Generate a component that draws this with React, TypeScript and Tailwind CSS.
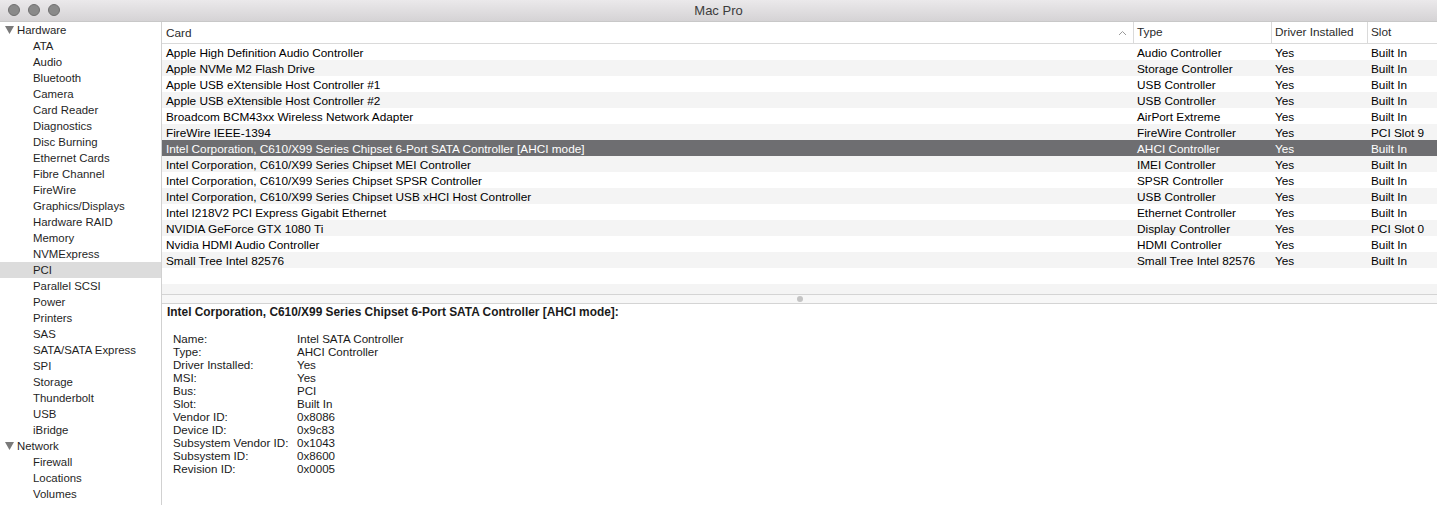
import React from 'react';

const hardware = [
  'ATA', 'Audio', 'Bluetooth', 'Camera', 'Card Reader', 'Diagnostics', 'Disc Burning', 'Ethernet Cards',
  'Fibre Channel', 'FireWire', 'Graphics/Displays', 'Hardware RAID', 'Memory', 'NVMExpress', 'PCI',
  'Parallel SCSI', 'Power', 'Printers', 'SAS', 'SATA/SATA Express', 'SPI', 'Storage', 'Thunderbolt', 'USB', 'iBridge',
];
const network = ['Firewall', 'Locations', 'Volumes'];

const cards: [string, string, string, string][] = [
  ['Apple High Definition Audio Controller', 'Audio Controller', 'Yes', 'Built In'],
  ['Apple NVMe M2 Flash Drive', 'Storage Controller', 'Yes', 'Built In'],
  ['Apple USB eXtensible Host Controller #1', 'USB Controller', 'Yes', 'Built In'],
  ['Apple USB eXtensible Host Controller #2', 'USB Controller', 'Yes', 'Built In'],
  ['Broadcom BCM43xx Wireless Network Adapter', 'AirPort Extreme', 'Yes', 'Built In'],
  ['FireWire IEEE-1394', 'FireWire Controller', 'Yes', 'PCI Slot 9'],
  ['Intel Corporation, C610/X99 Series Chipset 6-Port SATA Controller [AHCI mode]', 'AHCI Controller', 'Yes', 'Built In'],
  ['Intel Corporation, C610/X99 Series Chipset MEI Controller', 'IMEI Controller', 'Yes', 'Built In'],
  ['Intel Corporation, C610/X99 Series Chipset SPSR Controller', 'SPSR Controller', 'Yes', 'Built In'],
  ['Intel Corporation, C610/X99 Series Chipset USB xHCI Host Controller', 'USB Controller', 'Yes', 'Built In'],
  ['Intel I218V2 PCI Express Gigabit Ethernet', 'Ethernet Controller', 'Yes', 'Built In'],
  ['NVIDIA GeForce GTX 1080 Ti', 'Display Controller', 'Yes', 'PCI Slot 0'],
  ['Nvidia HDMI Audio Controller', 'HDMI Controller', 'Yes', 'Built In'],
  ['Small Tree Intel 82576', 'Small Tree Intel 82576', 'Yes', 'Built In'],
];

const details: [string, string][] = [
  ['Name:', 'Intel SATA Controller'],
  ['Type:', 'AHCI Controller'],
  ['Driver Installed:', 'Yes'],
  ['MSI:', 'Yes'],
  ['Bus:', 'PCI'],
  ['Slot:', 'Built In'],
  ['Vendor ID:', '0x8086'],
  ['Device ID:', '0x9c83'],
  ['Subsystem Vendor ID:', '0x1043'],
  ['Subsystem ID:', '0x8600'],
  ['Revision ID:', '0x0005'],
];

function Disclosure() {
  return (
    <svg width="9" height="8" viewBox="0 0 9 8" className="mr-[3px]">
      <path d="M0 0 H9 L4.5 8 Z" fill="#7a7a7a" />
    </svg>
  );
}

function SidebarGroup({ title, items }: { title: string; items: string[] }) {
  return (
    <div>
      <div className="flex h-4 items-center pl-[5px] text-[#1f1f1f]">
        <Disclosure />
        <span>{title}</span>
      </div>
      {items.map((item) => (
        <div key={item} className={`flex h-4 items-center pl-[33px] text-[#1f1f1f] ${item === 'PCI' ? 'bg-[#dcdcdc]' : ''}`}>
          {item}
        </div>
      ))}
    </div>
  );
}

export default function App() {
  return (
    <div className="flex h-[505px] w-[1437px] flex-col overflow-hidden bg-white text-[11.8px] leading-4 text-black" style={{ fontFamily: '"Liberation Sans", Arial, sans-serif' }}>
      <div className="relative flex h-[22px] shrink-0 items-center justify-center border-b border-[#c8c8c8] bg-gradient-to-b from-[#ebe9eb] to-[#d5d3d5]">
        <div className="absolute left-[8px] top-[4px] flex gap-[8px]">
          <span className="h-3 w-3 rounded-full border border-[#707070] bg-[#8a8a8a]" />
          <span className="h-3 w-3 rounded-full border border-[#707070] bg-[#8a8a8a]" />
          <span className="h-3 w-3 rounded-full border border-[#707070] bg-[#8a8a8a]" />
        </div>
        <span className="text-[13px] text-[#3c3c3c]">Mac Pro</span>
      </div>
      <div className="flex min-h-0 flex-1">
        <aside className="w-[162px] shrink-0 overflow-hidden border-r border-[#d1d1d1] text-[11.4px]">
          <SidebarGroup title="Hardware" items={hardware} />
          <SidebarGroup title="Network" items={network} />
        </aside>
        <main className="flex min-w-0 flex-1 flex-col">
          <div className="h-[272px] shrink-0 overflow-hidden">
            <div className="grid h-[22px] grid-cols-[971px_138px_96px_1fr] items-center border-b border-[#dadada] text-[#2a2a2a]">
              <div className="flex items-center justify-between pl-1 pr-[6px]">
                <span>Card</span>
                <svg width="9" height="6" viewBox="0 0 9 6"><path d="M1 5 L4.5 1.5 L8 5" fill="none" stroke="#9a9a9a" strokeWidth="1" /></svg>
              </div>
              <div className="h-full border-l border-[#dadada] pl-[3px] leading-[21px]">Type</div>
              <div className="h-full border-l border-[#dadada] pl-[3px] leading-[21px]">Driver Installed</div>
              <div className="h-full border-l border-[#dadada] pl-[3px] leading-[21px]">Slot</div>
            </div>
            {cards.map(([card, type, drv, slot], i) => {
              const sel = i === 6;
              return (
                <div
                  key={card}
                  className={`grid h-4 grid-cols-[971px_138px_96px_1fr] items-center pt-px ${sel ? 'bg-[#6e6e71] text-white' : i % 2 ? 'bg-[#f4f4f4]' : 'bg-white'}`}
                >
                  <div className="truncate pl-1">{card}</div>
                  <div className="pl-[4px]">{type}</div>
                  <div className="pl-[4px]">{drv}</div>
                  <div className="pl-[4px]">{slot}</div>
                </div>
              );
            })}
            <div className="h-4 bg-white" />
            <div className="h-4 bg-[#f4f4f4]" />
          </div>
          <div className="flex h-[10px] shrink-0 items-center justify-center border-y border-[#d4d4d4] bg-[#f7f7f7]">
            <span className="h-[6px] w-[6px] rounded-full bg-[#c4c4c4]" />
          </div>
          <div className="flex-1 pl-[5px] pt-px">
            <div className="text-[11.9px] font-bold leading-[15px] text-[#1a1a1a]">Intel Corporation, C610/X99 Series Chipset 6-Port SATA Controller [AHCI mode]:</div>
            <div className="mt-[12px] grid grid-cols-[124px_1fr] pl-[6px] text-[11.6px] leading-[13px] text-[#1a1a1a]">
              {details.map(([k, v]) => (
                <React.Fragment key={k}>
                  <div>{k}</div>
                  <div>{v}</div>
                </React.Fragment>
              ))}
            </div>
          </div>
        </main>
      </div>
    </div>
  );
}
